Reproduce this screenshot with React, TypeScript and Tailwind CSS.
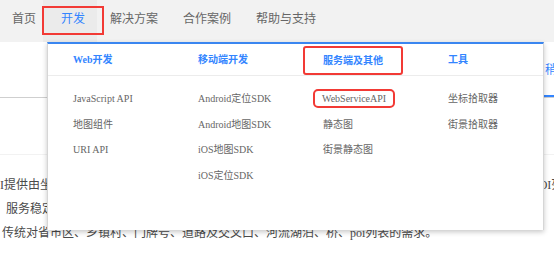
import type { ReactNode } from 'react';

const navItems = [
  { label: '首页', className: 'pl-[12px] pr-[7px]' },
  { label: '开发', className: 'pl-[18px] pr-[12px]', active: true },
  { label: '解决方案', className: 'pl-[13px] pr-[12px]' },
  { label: '合作案例', className: 'pl-[13px] pr-[12px]' },
  { label: '帮助与支持', className: 'pl-[13px] pr-[12px]' },
];

interface MenuColumn {
  title: string;
  items: string[];
  marked?: boolean;
}

const columns: MenuColumn[] = [
  { title: 'Web开发', items: ['JavaScript API', '地图组件', 'URI API'] },
  { title: '移动端开发', items: ['Android定位SDK', 'Android地图SDK', 'iOS地图SDK', 'iOS定位SDK'] },
  { title: '服务端及其他', items: ['WebServiceAPI', '静态图', '街景静态图'], marked: true },
  { title: '工具', items: ['坐标拾取器', '街景拾取器'] },
];

const serif = "font-['Liberation_Serif','Noto_Sans_CJK_SC',serif]";

const RedBox = ({ className, children }: { className: string; children?: ReactNode }) => (
  <span className={`rounded-[3px] border-2 border-[#f23a35] ${className}`}>{children}</span>
);

const DevMenu = () => (
  <div className="absolute left-[47px] top-[42px] h-[188px] w-[497px] border-x border-t-2 border-x-[#d6d6d6] border-t-[#3a86f0] bg-white shadow-[0_2px_5px_rgba(0,0,0,0.22)]">
    <div className="grid h-[32px] grid-cols-[125px_125px_125px_125px] border-b border-[#ececec]">
      {columns.map((col) =>
        col.marked ? (
          <div className="flex h-full items-end pl-[5px]" key={col.title}>
            <RedBox className="flex h-[29px] w-[100px] items-center pl-[18px]">
              <span className={`${serif} text-[10px] font-bold text-[#3385ff]`}>{col.title}</span>
            </RedBox>
          </div>
        ) : (
          <div className="flex h-full items-center pl-[25px]" key={col.title}>
            <span className={`${serif} text-[10px] font-bold text-[#3385ff]`}>{col.title}</span>
          </div>
        ),
      )}
    </div>
    <div className="grid grid-cols-[125px_125px_125px_125px] pt-[10px]">
      {columns.map((col) => (
        <div className="flex flex-col pl-[25px]" key={col.title}>
          {col.items.map((item) => (
            <div className={`flex h-[25.5px] items-center ${serif} text-[10px] text-[#666]`} key={item}>
              {item === 'WebServiceAPI' ? (
                <RedBox className="ml-[-10px] flex h-[19px] items-center rounded-[5px] px-[7px]">{item}</RedBox>
              ) : (
                item
              )}
            </div>
          ))}
        </div>
      ))}
    </div>
  </div>
);

export default function App() {
  return (
    <div className="relative h-[268px] w-[554px] overflow-hidden bg-white font-['Noto_Sans_CJK_SC',sans-serif]">
      <nav className="flex h-[42px] bg-[#f2f2f2] text-[12px] leading-[16px]">
        {navItems.map((item) => (
          <div
            className={`relative h-full pt-[10px] ${item.className} ${
              item.active ? 'bg-[#ebebeb] text-[#3385ff]' : 'text-[#666]'
            }`}
            key={item.label}
          >
            {item.label}
            {item.active && <RedBox className="absolute left-[-1px] top-[6px] h-[29px] w-[62px] rounded-none" />}
          </div>
        ))}
      </nav>

      <div className="flex h-[56px] border-b border-[#cfcfcf]">
        <div className="w-[543px] shrink-0" />
        <div className="flex items-center whitespace-nowrap border-b-2 border-[#3385ff] pl-[2px] text-[12px] text-[#3385ff]">
          稍后
        </div>
      </div>
      <div className="h-[57px] border-b border-[#f2f2f2]" />

      <div className={`pt-[18px] ${serif} whitespace-nowrap text-[12px] leading-[24px] text-[#4a4a4a]`}>
        <p>I提供由坐标到地址描述的转换服务，返回省市区街道门牌号以及附近的道路和兴趣点信息，包括周边POI列表。</p>
        <p className="pl-[6px]">服务稳定可靠，支持海量并发请求，满足各类业务场景下的地理编码需求，</p>
        <p className="pl-[2px]">传统对省市区、乡镇村、门牌号、道路及交叉口、河流湖泊、桥、poi列表的需求。</p>
      </div>

      <DevMenu />
    </div>
  );
}
